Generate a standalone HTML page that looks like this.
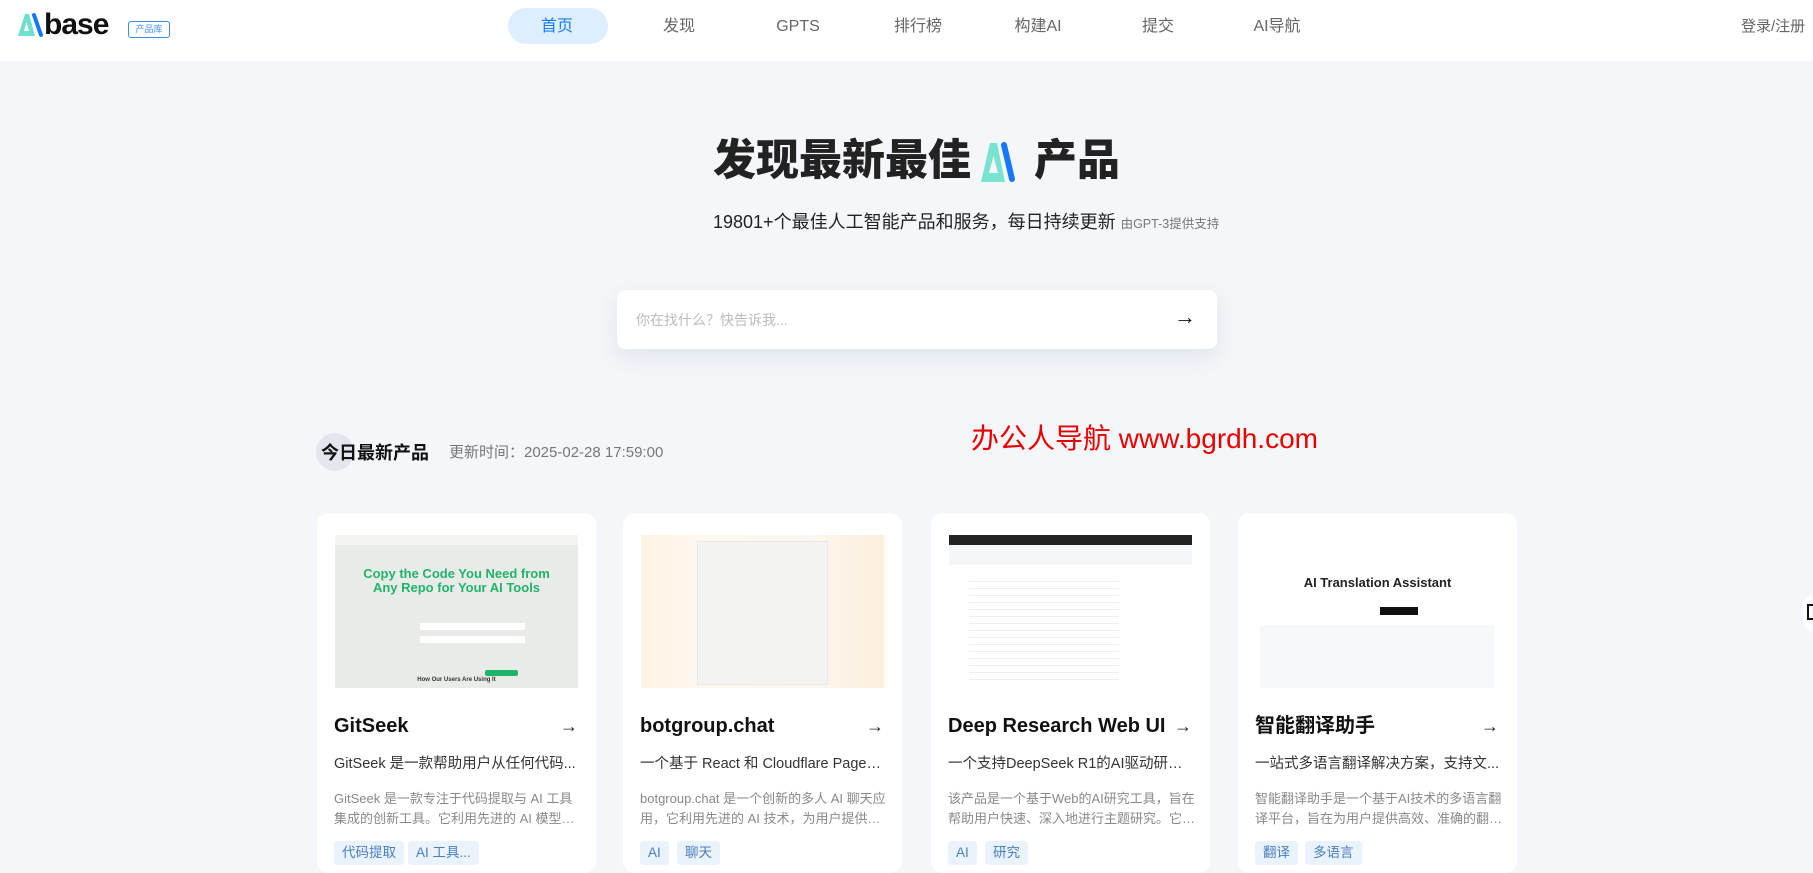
<!DOCTYPE html>
<html><head><meta charset="utf-8"><style>
*{margin:0;padding:0;box-sizing:border-box}
body{width:1813px;height:863px;overflow:hidden;background:#f5f6f9;font-family:"Liberation Sans","Noto Sans CJK SC",sans-serif;position:relative;color:#222}
.hdr{position:absolute;left:0;top:0;width:1813px;height:61px;background:#fff}
.abs{position:absolute;white-space:nowrap}
.nav{position:absolute;top:16px;height:22px;line-height:22px;font-size:16px;color:#666;transform:translateX(-50%)}
.card{position:absolute;top:513px;width:279px;height:360px;background:#fff;border-radius:12px}
.img{position:absolute;left:18px;top:22px;width:243px;height:153px;overflow:hidden}
.ct{position:absolute;left:17px;top:200px;height:26px;line-height:26px;font-size:20px;font-weight:bold;color:#111;white-space:nowrap}
.arr{position:absolute;right:18px;top:200px;height:26px;line-height:26px;font-size:18px;font-weight:bold;color:#222}
.cs{position:absolute;left:17px;top:240px;width:245px;height:22px;line-height:22px;font-size:14.5px;color:#333;white-space:nowrap;overflow:hidden;text-overflow:ellipsis}
.cd{position:absolute;left:17px;top:276px;width:248px;height:40px;font-size:13px;color:#888;line-height:20px;overflow:hidden;display:-webkit-box;-webkit-line-clamp:2;-webkit-box-orient:vertical}
.tag{position:absolute;top:328px;height:24px;line-height:18px;padding:3px 8px;background:#eaf2fb;color:#4a7fbf;font-size:13.5px;border-radius:4px}
</style></head><body>
<div class="hdr"></div>
<svg class="abs" style="left:17px;top:12px" width="30" height="26" viewBox="0 0 30 26"><path d="M1 24 L8 2 L12 2 L18 24 Z M7 19 L12 19 L9.5 10 Z" fill="#6ee0cf" fill-rule="evenodd"/><path d="M17 3 L24 23" stroke="#1477ff" stroke-width="4" stroke-linecap="round"/></svg>
<div class="abs" style="left:44px;top:8px;font-size:30px;line-height:34px;font-weight:bold;color:#111;letter-spacing:-1px">base</div>
<div class="abs" style="left:128px;top:21px;width:42px;height:17px;border:1px solid #3a8cf0;border-radius:3px;font-size:9px;color:#3a8cf0;text-align:center;line-height:15px">产品库</div>
<div class="abs" style="left:508px;top:8px;width:100px;height:36px;background:#ddeeff;border-radius:18px"></div>
<div class="nav" style="left:557px;color:#1a7cf0">首页</div>
<div class="nav" style="left:679px">发现</div>
<div class="nav" style="left:798px">GPTS</div>
<div class="nav" style="left:918px">排行榜</div>
<div class="nav" style="left:1038px">构建AI</div>
<div class="nav" style="left:1158px">提交</div>
<div class="nav" style="left:1277px">AI导航</div>
<div class="abs" style="left:1741px;top:16px;line-height:22px;font-size:15px;color:#666">登录/注册</div>

<div class="abs" style="left:713px;top:136px;font-size:43px;line-height:50px;font-weight:900;color:#222">发现最新最佳</div>
<svg class="abs" style="left:980px;top:140px" width="36" height="44" viewBox="0 0 36 44"><path d="M1 42 L10 3 L17 3 L25 42 Z M9 33 L18 33 L13.5 16 Z" fill="#78e3cf" fill-rule="evenodd"/><path d="M24 5 L32 39" stroke="#1677ff" stroke-width="6" stroke-linecap="round"/></svg>
<div class="abs" style="left:1034px;top:136px;font-size:43px;line-height:50px;font-weight:900;color:#222">产品</div>
<div class="abs" style="left:713px;top:210px;font-size:18px;line-height:24px;color:#222">19801+个最佳人工智能产品和服务，每日持续更新 <span style="font-size:12.5px;color:#777">由GPT-3提供支持</span></div>

<div class="abs" style="left:617px;top:290px;width:600px;height:59px;background:#fff;border-radius:8px;box-shadow:0 8px 22px rgba(160,175,205,.25)"></div>
<div class="abs" style="left:636px;top:310px;font-size:14px;color:#bbb">你在找什么？快告诉我...</div>
<div class="abs" style="left:1174px;top:304px;font-size:22px;font-weight:bold;color:#111">→</div>

<div class="abs" style="left:316px;top:433px;width:38px;height:38px;border-radius:50%;background:#e4e6ee"></div>
<div class="abs" style="left:321px;top:441px;font-size:18px;line-height:24px;font-weight:bold;color:#111">今日最新产品</div>
<div class="abs" style="left:449px;top:443px;font-size:15px;line-height:20px;color:#777">更新时间：2025-02-28 17:59:00</div>
<div class="abs" style="left:971px;top:421px;font-size:28px;line-height:36px;color:#e60000">办公人导航 www.bgrdh.com</div>

<div class="card" style="left:317px">
 <div class="img" style="background:#e9ebe8">
  <div style="position:absolute;left:0;top:0;width:243px;height:10px;background:#f4f5f3"></div>
  <div style="position:absolute;left:0;top:32px;width:243px;text-align:center;font-size:13px;font-weight:bold;color:#20b36a;line-height:14px">Copy the Code You Need from<br>Any Repo for Your AI Tools</div>
  <div style="position:absolute;left:85px;top:88px;width:105px;height:7px;background:#fff"></div>
  <div style="position:absolute;left:85px;top:101px;width:105px;height:7px;background:#fff"></div>
  <div style="position:absolute;left:150px;top:135px;width:33px;height:6px;background:#20b36a;border-radius:2px"></div>
  <div style="position:absolute;left:0;top:142px;width:243px;text-align:center;font-size:6px;font-weight:bold;color:#333">How Our Users Are Using It</div>
 </div>
 <div class="ct">GitSeek</div><div class="arr">→</div>
 <div class="cs">GitSeek 是一款帮助用户从任何代码...</div>
 <div class="cd">GitSeek 是一款专注于代码提取与 AI 工具集成的创新工具。它利用先进的 AI 模型，能够...</div>
 <div class="tag" style="left:17px">代码提取</div><div class="tag" style="left:91px">AI 工具...</div>
</div>
<div class="card" style="left:623px">
 <div class="img" style="background:linear-gradient(90deg,#fdf3e6,#fff8ef 30%,#fbf6ef 70%,#fdefdc)">
  <div style="position:absolute;left:56px;top:6px;width:131px;height:144px;background:#f3f3f2;border:1px solid #e8e8e8"></div>
 </div>
 <div class="ct">botgroup.chat</div><div class="arr">→</div>
 <div class="cs">一个基于 React 和 Cloudflare Pages...</div>
 <div class="cd">botgroup.chat 是一个创新的多人 AI 聊天应用，它利用先进的 AI 技术，为用户提供类似...</div>
 <div class="tag" style="left:17px">AI</div><div class="tag" style="left:54px">聊天</div>
</div>
<div class="card" style="left:931px">
 <div class="img" style="background:#fff">
  <div style="position:absolute;left:0;top:0;width:243px;height:10px;background:#222"></div>
  <div style="position:absolute;left:0;top:10px;width:243px;height:20px;background:#f4f5f7"></div>
  <div style="position:absolute;left:20px;top:40px;width:150px;height:110px;background:repeating-linear-gradient(#fff 0 6px,#eee 6px 7px)"></div>
 </div>
 <div class="ct">Deep Research Web UI</div><div class="arr">→</div>
 <div class="cs">一个支持DeepSeek R1的AI驱动研究...</div>
 <div class="cd">该产品是一个基于Web的AI研究工具，旨在帮助用户快速、深入地进行主题研究。它通过...</div>
 <div class="tag" style="left:17px">AI</div><div class="tag" style="left:54px">研究</div>
</div>
<div class="card" style="left:1238px">
 <div class="img" style="background:#fff">
  <div style="position:absolute;left:0;top:40px;width:243px;text-align:center;font-size:13px;font-weight:bold;color:#222">AI Translation Assistant</div>
  <div style="position:absolute;left:124px;top:72px;width:38px;height:8px;background:#111"></div>
  <div style="position:absolute;left:4px;top:90px;width:234px;height:63px;background:#f7f8fa"></div>
 </div>
 <div class="ct">智能翻译助手</div><div class="arr">→</div>
 <div class="cs">一站式多语言翻译解决方案，支持文...</div>
 <div class="cd">智能翻译助手是一个基于AI技术的多语言翻译平台，旨在为用户提供高效、准确的翻译服...</div>
 <div class="tag" style="left:17px">翻译</div><div class="tag" style="left:67px">多语言</div>
</div>
<div class="abs" style="left:1803px;top:593px;width:30px;height:40px;background:#fff;border-radius:14px"></div>
<div class="abs" style="left:1807px;top:604px;width:8px;height:16px;border:2px solid #111;border-right:none"></div>
</body></html>
